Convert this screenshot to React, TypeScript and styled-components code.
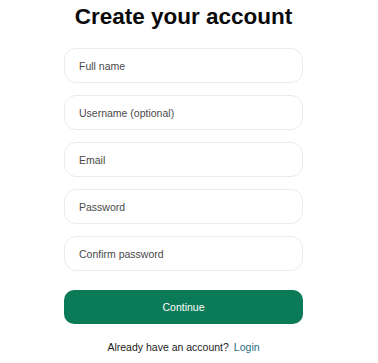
import React from "react";
import styled, { createGlobalStyle } from "styled-components";

const GlobalStyle = createGlobalStyle`
  body {
    margin: 0;
    background: #fff;
    font-family: "Liberation Sans", Arial, sans-serif;
  }
`;

const Page = styled.div`
  width: 367px;
  display: flex;
  flex-direction: column;
  align-items: center;
  padding-top: 4px;
`;

const Title = styled.h1`
  margin: 0;
  font-size: 22.5px;
  line-height: 26px;
  font-weight: 700;
  color: #0a0a0a;
`;

const Form = styled.form`
  width: 239px;
  margin-top: 18px;
  display: flex;
  flex-direction: column;
  gap: 12px;
`;

const Field = styled.input`
  box-sizing: border-box;
  width: 100%;
  height: 35px;
  padding: 0 14px;
  border: 1px solid #ebebeb;
  border-radius: 12px;
  font-family: inherit;
  font-size: 10.5px;
  color: #333;
  outline: none;
  &::placeholder {
    color: #4a4a4a;
  }
`;

const Submit = styled.button`
  height: 34px;
  margin-top: 7px;
  border: none;
  border-radius: 10px;
  background: #0b7a57;
  color: #fff;
  font-family: inherit;
  font-size: 10.5px;
  cursor: pointer;
`;

const Footer = styled.div`
  margin-top: 16px;
  font-size: 10.5px;
  line-height: 14px;
  color: #222;
  a {
    color: #2a6d80;
    text-decoration: none;
    margin-left: 5px;
  }
`;

const App = () => {
  return (
    <>
      <GlobalStyle />
      <Page>
        <Title>Create your account</Title>
        <Form onSubmit={(e) => e.preventDefault()}>
          <Field placeholder="Full name" />
          <Field placeholder="Username (optional)" />
          <Field placeholder="Email" type="email" />
          <Field placeholder="Password" type="password" />
          <Field placeholder="Confirm password" type="password" />
          <Submit type="submit">Continue</Submit>
        </Form>
        <Footer>
          Already have an account?<a href="#">Login</a>
        </Footer>
      </Page>
    </>
  );
};

export default App;
